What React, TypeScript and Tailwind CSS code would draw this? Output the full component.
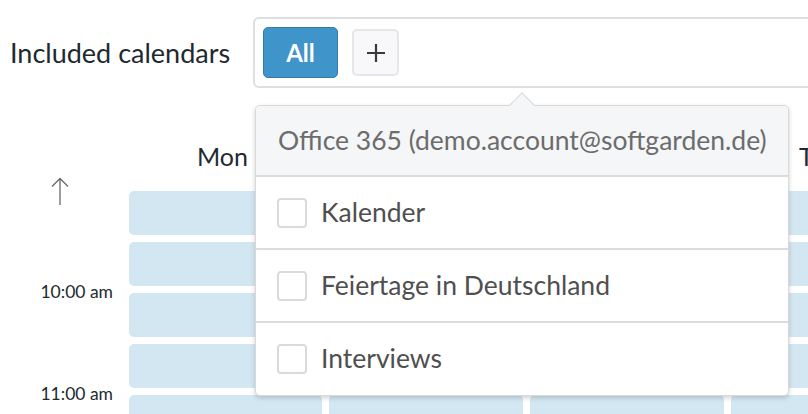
const days = ["Mon", "Tue", "Wed", "Thu"];
const slots = [0, 1, 2, 3, 4];
const calendars = ["Kalender", "Feiertage in Deutschland", "Interviews"];

function PlusIcon() {
  return (
    <svg width="20" height="20" viewBox="0 0 20 20" fill="none">
      <path d="M10 1v18M1 10h18" stroke="#3a3a3a" strokeWidth="2.2" />
    </svg>
  );
}

function UpArrow() {
  return (
    <svg width="20" height="28" viewBox="0 0 20 28" fill="none">
      <path d="M10 1.5V28M2 9.5l8-8 8 8" stroke="#6a6a6a" strokeWidth="1.3" />
    </svg>
  );
}

function CalendarPicker() {
  return (
    <div className="absolute left-[255px] top-[105px] w-[534px] rounded-[5px] border border-[#d9d9d9] bg-white shadow-[0_2px_5px_rgba(0,0,0,0.18)]">
      <div className="absolute left-[257px] top-[-10px] h-[18px] w-[18px] rotate-45 border-l border-t border-[#d9d9d9] bg-[#f5f6f8]" />
      <div className="relative flex h-[71px] items-center whitespace-nowrap rounded-t-[5px] border-b-2 border-[#dcdcdc] bg-[#f5f6f8] px-[22px] pt-[1px] text-[26.5px] text-[#6c6c6c]">
        Office 365 (demo.account@softgarden.de)
      </div>
      <ul>
        {calendars.map((name, i) => (
          <li
            key={name}
            className={`flex items-center gap-[14px] whitespace-nowrap px-[21px] text-[26.5px] text-[#4f4f4f] ${
              i < calendars.length - 1 ? "h-[73px] border-b-2 border-[#dcdcdc]" : "h-[72px]"
            }`}
          >
            <span className="h-[30px] w-[30px] shrink-0 rounded-[4px] border-2 border-[#dadada] bg-white" />
            {name}
          </li>
        ))}
      </ul>
    </div>
  );
}

export default function App() {
  return (
    <div className="relative h-[414px] w-[808px] overflow-hidden bg-white font-['Lato',sans-serif] text-[#1e2a30]">
      <div className="flex h-[105px] items-start pt-[17px]">
        <div className="flex h-[71px] w-[253px] shrink-0 items-center whitespace-nowrap pl-[10px] pt-[1px] text-[27px]">
          Included calendars
        </div>
        <div className="flex h-[71px] w-[600px] shrink-0 items-center gap-[14px] rounded-[6px] border-2 border-[#dfdfdf] pl-[8px]">
          <button className="h-[51px] w-[75px] rounded-[5px] border border-[#357aab] bg-[#3f95ca] text-[24px] font-bold text-white">
            All
          </button>
          <button className="flex h-[47px] w-[47px] items-center justify-center rounded-[5px] border-2 border-[#e6e6ea] bg-[#f8f8fa]">
            <PlusIcon />
          </button>
        </div>
      </div>

      <div className="flex">
        <div className="flex w-[129px] shrink-0 flex-col whitespace-nowrap pt-[72px] pr-[16px] text-right text-[17.5px] leading-[20px]">
          <div className="ml-[50px]">
            <UpArrow />
          </div>
          <div className="mt-[77px]">10:00 am</div>
          <div className="mt-[82px]">11:00 am</div>
        </div>
        <div className="grid shrink-0 grid-cols-[193px_194px_194px_194px] gap-x-[7px]">
          {days.map((day) => (
            <div key={day} className="flex flex-col">
              <div className="flex h-[86px] items-end whitespace-nowrap pb-[20px] pl-[68px] text-[25px] leading-[30px]">
                {day}
              </div>
              <div className="flex flex-col gap-[7px]">
                {slots.map((s) => (
                  <div key={s} className="h-[44px] rounded-[5px] bg-[#d3e7f2]" />
                ))}
              </div>
            </div>
          ))}
        </div>
      </div>

      <CalendarPicker />
    </div>
  );
}
